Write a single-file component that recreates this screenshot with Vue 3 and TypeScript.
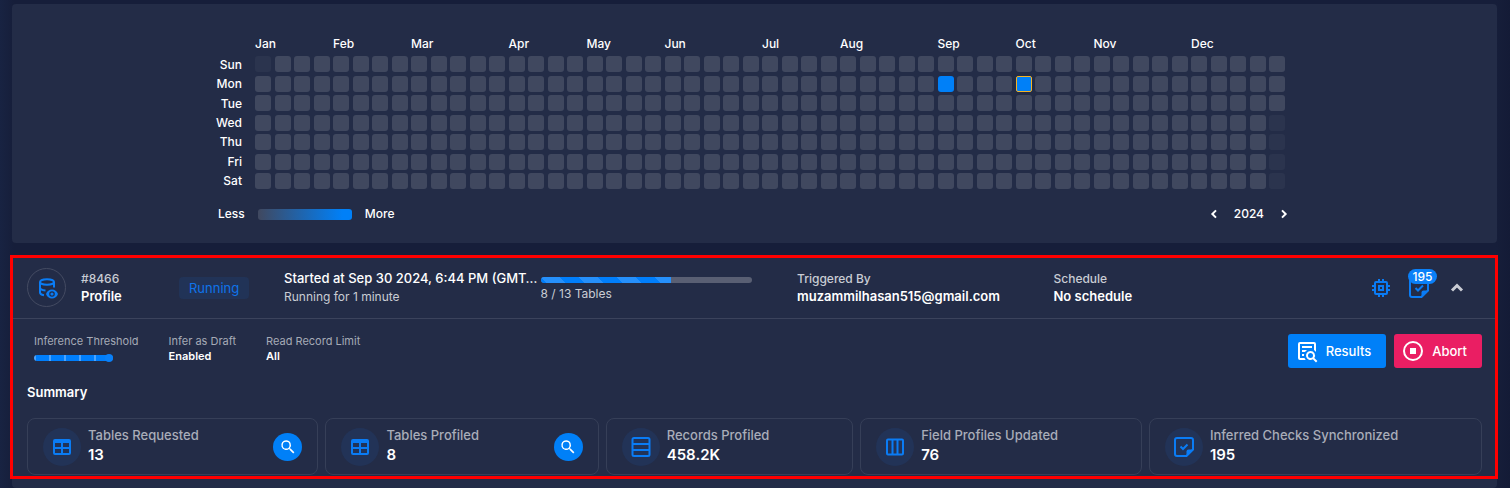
<script setup lang="ts">
import { ref, computed } from 'vue'

interface Cell { key: string; state: 'empty' | 'muted' | 'active' | 'today' }
interface Stat { label: string; value: string; icon: string; search: boolean }

const days = ['Sun', 'Mon', 'Tue', 'Wed', 'Thu', 'Fri', 'Sat']
const weeks = 53

const months = [
  { name: 'Jan', week: 0 }, { name: 'Feb', week: 4 }, { name: 'Mar', week: 8 },
  { name: 'Apr', week: 13 }, { name: 'May', week: 17 }, { name: 'Jun', week: 21 },
  { name: 'Jul', week: 26 }, { name: 'Aug', week: 30 }, { name: 'Sep', week: 35 },
  { name: 'Oct', week: 39 }, { name: 'Nov', week: 43 }, { name: 'Dec', week: 48 },
]

const year = ref(2024)

function stateOf(day: number, week: number): Cell['state'] {
  if (week === 0 && day === 0) return 'muted'
  if (week === weeks - 1 && day > 2) return 'muted'
  if (day === 1 && week === 35) return 'active'
  if (day === 1 && week === 39) return 'today'
  return 'empty'
}

const cells = computed<Cell[]>(() =>
  days.flatMap((_, d) =>
    Array.from({ length: weeks }, (_, w) => ({ key: `${d}-${w}`, state: stateOf(d, w) })),
  ),
)

const done = 8
const total = 13
const open = ref(true)
const threshold = ref(5)

const stats: Stat[] = [
  { label: 'Tables Requested', value: '13', icon: 'table', search: true },
  { label: 'Tables Profiled', value: '8', icon: 'table', search: true },
  { label: 'Records Profiled', value: '458.2K', icon: 'rows', search: false },
  { label: 'Field Profiles Updated', value: '76', icon: 'columns', search: false },
  { label: 'Inferred Checks Synchronized', value: '195', icon: 'check', search: false },
]
</script>

<template>
  <main class="page">
    <section class="card calendar">
      <div class="heat">
        <div class="heat-main">
          <div class="days">
            <span v-for="d in days" :key="d">{{ d }}</span>
          </div>
          <div class="months">
            <span v-for="m in months" :key="m.name" :style="{ gridColumn: m.week + 1 }">{{ m.name }}</span>
          </div>
          <div class="cells">
            <i v-for="c in cells" :key="c.key" class="cell" :class="c.state"></i>
          </div>
        </div>
        <div class="legend">
          <span>Less</span>
          <span class="scale"></span>
          <span>More</span>
          <div class="years">
            <button type="button" aria-label="Previous year" @click="year--">
              <svg viewBox="0 0 24 24"><path d="M15 6.5 9.5 12l5.5 5.5" /></svg>
            </button>
            <span>{{ year }}</span>
            <button type="button" aria-label="Next year" @click="year++">
              <svg viewBox="0 0 24 24"><path d="M9 6.5 14.5 12 9 17.5" /></svg>
            </button>
          </div>
        </div>
      </div>
    </section>

    <section class="card operation">
      <div class="framed">
        <header class="head">
          <div class="ident">
            <span class="ring">
              <svg class="icon" viewBox="0 0 24 24">
                <g class="line">
                  <ellipse cx="12" cy="6" rx="7" ry="2.8" />
                  <path d="M5 6v10.5c0 1.3 1.5 2.3 4 2.700M5 11.5c0 1.500 2 2.600 5.500 2.900M19 6v5.500" />
                </g>
                <path fill-rule="evenodd" d="M17 13.5c-2.700 0-5 1.700-6 4.500 1 2.800 3.300 4.500 6 4.500s5-1.700 6-4.500c-1-2.800-3.300-4.500-6-4.500zm0 1.700a2.800 2.800 0 1 1 0 5.600 2.800 2.800 0 0 1 0-5.600z" />
                <circle cx="17" cy="18" r="1.6" />
              </svg>
            </span>
            <div class="names">
              <span class="note">#8466</span>
              <strong class="strong">Profile</strong>
            </div>
            <span class="chip">Running</span>
          </div>
          <div class="started">
            <strong class="strong">Started at Sep 30 2024, 6:44 PM (GMT…</strong>
            <span class="note light">Running for 1 minute</span>
          </div>
          <div class="progress">
            <div class="track" role="progressbar" aria-label="Tables profiled" :aria-valuenow="done" :aria-valuemax="total">
              <div class="bar" :style="{ width: (done / total) * 100 + '%' }"></div>
            </div>
            <span class="note light">{{ done }} / {{ total }} Tables</span>
          </div>
          <div class="meta">
            <span class="note">Triggered By</span>
            <strong class="strong">muzammilhasan515@gmail.com</strong>
          </div>
          <div class="meta">
            <span class="note">Schedule</span>
            <strong class="strong">No schedule</strong>
          </div>
          <div class="tools">
            <svg class="icon" viewBox="0 0 24 24">
              <path d="M17 17H7V7h10M21 11V9h-2V7a2 2 0 0 0-2-2h-2V3h-2v2h-2V3H9v2H7a2 2 0 0 0-2 2v2H3v2h2v2H3v2h2v2a2 2 0 0 0 2 2h2v2h2v-2h2v2h2v-2h2a2 2 0 0 0 2-2v-2h2v-2h-2v-2M13 13h-2v-2h2M15 9H9v6h6z" />
            </svg>
            <span class="checks">
              <svg class="icon" viewBox="0 0 24 24">
                <path class="line" d="M14.5 21H5a2 2 0 0 1-2-2V5a2 2 0 0 1 2-2h14a2 2 0 0 1 2 2v9.500zM8.500 12l2.500 2.500 5-5" />
                <path d="M14.5 21v-4.500a2 2 0 0 1 2-2H21z" />
              </svg>
              <b class="badge">195</b>
            </span>
            <button class="toggle" type="button" aria-label="Toggle details" :aria-expanded="open" @click="open = !open">
              <svg viewBox="0 0 24 24"><path d="m7 14.500 5-5 5 5" /></svg>
            </button>
          </div>
        </header>

        <div class="body">
          <div class="params">
            <div class="param">
              <label for="threshold">Inference Threshold</label>
              <input id="threshold" v-model="threshold" class="range" type="range" min="0" max="5" />
            </div>
            <div class="param">
              <span>Infer as Draft</span>
              <strong>Enabled</strong>
            </div>
            <div class="param">
              <span>Read Record Limit</span>
              <strong>All</strong>
            </div>
            <div class="actions">
              <button class="btn blue" type="button">
                <svg viewBox="0 0 24 24"><path d="M15.5 12a4.500 4.500 0 0 1 3.810 6.900L22.390 22 21 23.390l-3.120-3.070A4.500 4.500 0 1 1 15.500 12m0 2a2.500 2.500 0 1 0 0 5 2.500 2.500 0 0 0 0-5M5 3h14a2 2 0 0 1 2 2v8.030A6.600 6.600 0 0 0 19 11V5H5v14h4.500c.31.75.76 1.420 1.310 2H5a2 2 0 0 1-2-2V5a2 2 0 0 1 2-2m2 4h10v2H7zm0 4h5.030c-.8.5-1.490 1.190-2.030 2H7zm0 4h2.170C9.060 15.500 9 16 9 16.500v.5H7z" /></svg>
                Results
              </button>
              <button class="btn pink" type="button">
                <svg viewBox="0 0 24 24"><path d="M12 2a10 10 0 1 0 0 20 10 10 0 0 0 0-20m0 2a8 8 0 1 1 0 16 8 8 0 0 1 0-16M9 9v6h6V9" /></svg>
                Abort
              </button>
            </div>
          </div>

          <h2>Summary</h2>

          <div class="stats">
            <article v-for="s in stats" :key="s.label" class="stat">
              <span class="disc">
                <svg v-if="s.icon === 'table'" class="icon" viewBox="0 0 24 24">
                  <path d="M5 4h14a2 2 0 0 1 2 2v12a2 2 0 0 1-2 2H5a2 2 0 0 1-2-2V6a2 2 0 0 1 2-2m0 4v4h6V8zm8 0v4h6V8zm-8 6v4h6v-4zm8 0v4h6v-4z" />
                </svg>
                <svg v-else-if="s.icon === 'rows'" class="icon" viewBox="0 0 24 24">
                  <path class="line" d="M5 3h14a1.500 1.500 0 0 1 1.500 1.500v15A1.500 1.500 0 0 1 19 21H5a1.500 1.500 0 0 1-1.500-1.500v-15A1.500 1.500 0 0 1 5 3zM3.500 9h17M3.500 15h17" />
                </svg>
                <svg v-else-if="s.icon === 'columns'" class="icon" viewBox="0 0 24 24">
                  <path class="line" d="M5 4.500h14a1 1 0 0 1 1 1v13a1 1 0 0 1-1 1H5a1 1 0 0 1-1-1v-13a1 1 0 0 1 1-1zM9.500 4.500v15M14.500 4.500v15" />
                </svg>
                <svg v-else class="icon" viewBox="0 0 24 24">
                  <path class="line" d="M14.5 21H5a2 2 0 0 1-2-2V5a2 2 0 0 1 2-2h14a2 2 0 0 1 2 2v9.500zM8.500 11.500l2.500 2.500 4.500-4.500" />
                  <path d="M14.5 21v-4.500a2 2 0 0 1 2-2H21z" />
                </svg>
              </span>
              <div class="figures">
                <span>{{ s.label }}</span>
                <strong>{{ s.value }}</strong>
              </div>
              <button v-if="s.search" class="find" type="button" :aria-label="'Search ' + s.label">
                <svg viewBox="0 0 24 24"><path d="M9.5 3a6.500 6.500 0 0 1 4.940 10.730l.27.27h.79l5 5-1.500 1.500-5-5v-.79l-.27-.27A6.500 6.500 0 1 1 9.500 3m0 2a4.500 4.500 0 1 0 0 9 4.500 4.500 0 0 0 0-9" /></svg>
              </button>
            </article>
          </div>
        </div>
        <div class="frame"></div>
      </div>
    </section>
  </main>
</template>

<style>
body {
  background: #171f3b;
}
</style>

<style scoped>
.page {
  box-sizing: border-box;
  display: flex;
  flex-direction: column;
  gap: 14px;
  min-height: 100vh;
  padding: 4px 13px 0 12px;
  background: linear-gradient(90deg, #182342, #161e3a 14px, #161e3a calc(100% - 14px), #141b36);
  color: #fff;
  font-family: Inter, "Open Sans", sans-serif;
  font-size: 13px;
  line-height: 18px;
}
.card {
  background: #232c47;
  border-radius: 4px;
}
.calendar {
  padding: 32px 16px 18px;
}
.heat {
  max-width: 1079px;
  margin: 0 auto;
  font-size: 12px;
  font-weight: 500;
  line-height: 16px;
}
.heat-main {
  display: grid;
  grid-template-columns: 27px 1fr;
  column-gap: 13px;
  row-gap: 4px;
  padding-right: 9px;
}
.months,
.cells {
  display: grid;
  grid-template-columns: repeat(53, minmax(0, 16px));
  column-gap: 3px;
  justify-content: space-between;
}
.months {
  grid-column: 2;
  grid-row: 1;
}
.days {
  grid-column: 1;
  grid-row: 2;
  display: flex;
  flex-direction: column;
  justify-content: space-between;
  text-align: right;
  align-items: flex-end;
  padding-top: 1px;
}
.cells {
  grid-column: 2;
  grid-row: 2;
  grid-auto-rows: 16px;
  align-content: space-between;
  height: 133px;
}
.cell {
  box-sizing: border-box;
  border-radius: 3px;
  background: #40485f;
}
.cell.muted {
  background: #2b344e;
}
.cell.active {
  background: #0080f8;
}
.cell.today {
  background: #0080f8;
  border: 1px solid #f5b324;
  border-radius: 2px;
}
.legend {
  display: flex;
  align-items: center;
  gap: 13px;
  padding: 14px 0 0 3px;
}
.scale {
  width: 94px;
  height: 11px;
  border-radius: 3px;
  background: linear-gradient(90deg, #40485f, #0080f8 90%);
}
.years {
  display: flex;
  align-items: center;
  gap: 10px;
  margin-left: auto;
}
.years button {
  display: grid;
  place-items: center;
  width: 20px;
  height: 22px;
  padding: 0;
  border: 0;
  background: none;
  cursor: pointer;
}
.years svg {
  width: 16px;
  height: 16px;
  fill: none;
  stroke: #fff;
  stroke-width: 3;
}
.operation {
  flex: 1;
}
.framed {
  position: relative;
}
.frame {
  position: absolute;
  inset: -2px -1px -4px -2px;
  border: 3px solid #f00;
  pointer-events: none;
}
.icon {
  width: 24px;
  height: 24px;
  fill: #0a7cf5;
}
.icon .line {
  fill: none;
  stroke: #0a7cf5;
  stroke-width: 2;
}
.head {
  display: grid;
  grid-template-columns: 257px repeat(4, minmax(0, 1fr)) 172px;
  align-items: center;
  height: 61px;
  padding: 0 15px;
  border-bottom: 1px solid #3b435c;
}
.ident {
  display: flex;
  align-items: center;
}
.ring {
  box-sizing: border-box;
  display: grid;
  place-items: center;
  width: 39px;
  height: 39px;
  border: 1px solid #444b62;
  border-radius: 50%;
}
.names {
  width: 83px;
  margin: 0 15px;
}
.names,
.started,
.meta {
  display: flex;
  flex-direction: column;
  white-space: nowrap;
}
.note {
  color: #c9ccd4;
  font-size: 12px;
  font-weight: 500;
  line-height: 17px;
}
.light {
  font-weight: 400;
}
.strong {
  font-size: 13px;
  font-weight: 600;
  line-height: 18px;
}
.chip {
  padding: 2px 10px;
  border-radius: 4px;
  background: #213357;
  color: #0f74ea;
  font-size: 13px;
}
.started {
  padding-right: 12px;
}
.started .strong {
  font-weight: 500;
}
.started .note {
  line-height: 19px;
}
.progress {
  padding: 3px 45px 0 0;
}
.progress .note {
  display: block;
  padding-top: 2px;
}
.track {
  height: 6px;
  border-radius: 3px;
  background: #595f73;
  overflow: hidden;
}
.bar {
  height: 100%;
  background: linear-gradient(45deg, #2690fb 25%, #007efb 25%, #007efb 50%, #2690fb 50%, #2690fb 75%, #007efb 75%) 0 0 / 38px 38px;
}
.tools {
  display: flex;
  align-items: center;
  justify-content: flex-end;
  gap: 14px;
  padding-right: 13px;
}
.tools .icon {
  display: block;
}
.checks {
  position: relative;
}
.badge {
  position: absolute;
  top: -7px;
  left: 1px;
  width: 29px;
  height: 15px;
  border-radius: 8px;
  background: #0a80f8;
  font-size: 12px;
  font-weight: 500;
  line-height: 15px;
  text-align: center;
}
.toggle {
  width: 24px;
  height: 24px;
  padding: 0;
  border: 0;
  background: none;
  cursor: pointer;
}
.toggle svg {
  display: block;
  fill: none;
  stroke: #c9ccd4;
  stroke-width: 3;
}
.body {
  padding: 15px 15px 0;
}
.params {
  display: flex;
  gap: 30px;
  padding-left: 7px;
}
.param {
  display: flex;
  flex-direction: column;
  color: #a5aab6;
  font-size: 11px;
  line-height: 15px;
}
.param strong {
  color: #fff;
  font-weight: 600;
}
.range {
  appearance: none;
  width: 79px;
  height: 6px;
  margin: 6px 0 0;
  border-radius: 3px;
  background: repeating-linear-gradient(90deg, #4da3fb 0 2px, #007efb 2px 15px);
}
.range::-webkit-slider-thumb {
  appearance: none;
  width: 8px;
  height: 8px;
  border-radius: 50%;
  background: #0a80f8;
}
.actions {
  display: flex;
  gap: 8px;
  margin-left: auto;
}
.btn {
  display: flex;
  align-items: center;
  gap: 7px;
  height: 34px;
  padding: 0 15px 0 7px;
  border: 0;
  border-radius: 3px;
  color: #fff;
  font: 500 13px/18px Inter, sans-serif;
  cursor: pointer;
}
.btn svg {
  width: 24px;
  height: 24px;
  fill: #fff;
}
.blue {
  background: #0080f8;
}
.pink {
  background: #ea1e63;
}
h2 {
  margin: 15px 0 17px;
  font-size: 13px;
  font-weight: 600;
  line-height: 18px;
}
.stats {
  display: flex;
  gap: 7px;
}
.stat {
  box-sizing: border-box;
  display: flex;
  flex: 1 1 auto;
  align-items: center;
  gap: 7px;
  height: 57px;
  padding: 0 15px;
  border: 1px solid #363f58;
  border-radius: 8px;
  white-space: nowrap;
}
.disc {
  display: grid;
  flex: none;
  place-items: center;
  width: 38px;
  height: 38px;
  border-radius: 50%;
  background: #223357;
}
.figures {
  display: flex;
  flex-direction: column;
  padding-bottom: 2px;
  color: #a9adb9;
  font-weight: 500;
}
.figures strong {
  color: #fff;
  font-size: 15px;
  font-weight: 600;
  line-height: 21px;
}
.find {
  display: grid;
  place-items: center;
  width: 29px;
  height: 28px;
  margin-left: auto;
  padding: 0;
  border: 0;
  border-radius: 50%;
  background: #0080f8;
  cursor: pointer;
}
.find svg {
  width: 18px;
  height: 18px;
  fill: #fff;
}
</style>
